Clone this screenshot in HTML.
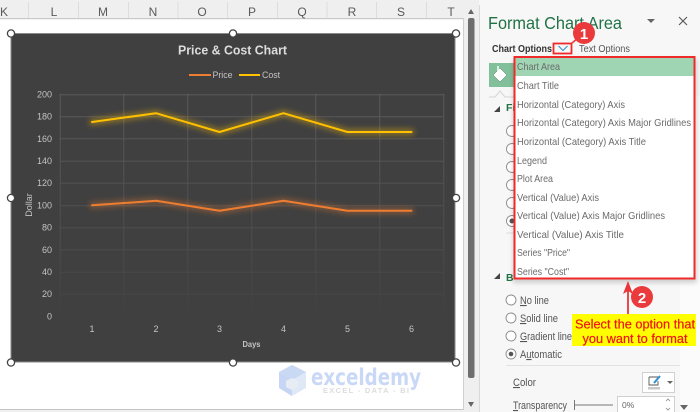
<!DOCTYPE html>
<html><head><meta charset="utf-8">
<style>
html,body{margin:0;padding:0;background:#fff}
svg{display:block}
text{font-family:"Liberation Sans",sans-serif}
.h{font-size:12px;fill:#5a5a5a;text-anchor:middle}
.y{font-size:9px;fill:#c4c4c4;text-anchor:end}
.x{font-size:9px;fill:#c4c4c4;text-anchor:middle}
.m{font-size:10.4px;fill:#6b6b6b}
.l{font-size:11px;fill:#555}
</style></head>
<body>
<svg width="700" height="412" viewBox="0 0 700 412" xmlns="http://www.w3.org/2000/svg">
<defs>
<filter id="g" x="-10%" y="-80%" width="120%" height="260%"><feGaussianBlur stdDeviation="3"/></filter>
<filter id="s" x="-5%" y="-5%" width="110%" height="110%"><feGaussianBlur stdDeviation="2.5"/></filter>
<linearGradient id="gr" gradientUnits="userSpaceOnUse" x1="0" y1="94" x2="0" y2="316"><stop offset="0" stop-color="#5e5e5e"/><stop offset=".65" stop-color="#4f4f4f"/><stop offset="1" stop-color="#424242"/></linearGradient>
</defs>
<rect width="700" height="412" fill="#fff"/>
<!-- column header -->
<rect width="468" height="18" fill="#efefef"/>
<rect y="18" width="464" height="1.2" fill="#c8c8c8"/>
<g stroke="#dcdcdc"><path d="M28.5 2V18M78.5 2V18M128.5 2V18M178 2V18M227.5 2V18M277.5 2V18M327 2V18M376.5 2V18M426.5 2V18"/></g>
<text class="h" x="4" y="16">K</text><text class="h" x="54" y="16">L</text><text class="h" x="103" y="16">M</text><text class="h" x="153" y="16">N</text><text class="h" x="202" y="16">O</text><text class="h" x="252" y="16">P</text><text class="h" x="302" y="16">Q</text><text class="h" x="352" y="16">R</text><text class="h" x="401" y="16">S</text><text class="h" x="451" y="16">T</text>
<!-- sheet edges -->
<rect y="409" width="464" height="3" fill="#f0f0f0"/><rect y="409" width="464" height="1" fill="#c4c4c4"/>
<rect x="463" y="18" width="1" height="392" fill="#d0d0d0"/>
<rect x="464" y="0" width="15" height="412" fill="#efefef"/>
<rect x="468" y="18" width="6.5" height="360" rx="2" fill="#6e6e6e"/>
<path d="M468 14L471 9L474 14Z" fill="#666"/><path d="M468 402H474L471 407Z" fill="#666"/>
<!-- chart -->
<rect x="11" y="33.5" width="444" height="328.5" fill="#404040" stroke="#8a8a8a" stroke-width="1"/>
<text x="232.5" y="54.500" text-anchor="middle" font-size="13" font-weight="bold" fill="#dcdcdc" textLength="109" lengthAdjust="spacingAndGlyphs">Price &amp; Cost Chart</text>
<path d="M189 75H211" stroke="#ed7d31" stroke-width="2"/><text x="212.500" y="78" font-size="8.800" fill="#c4c4c4">Price</text>
<path d="M239 75H260" stroke="#ffc000" stroke-width="2"/><text x="262" y="78" font-size="8.800" fill="#c4c4c4">Cost</text>
<!-- grid -->
<g stroke="url(#gr)" stroke-width="1" fill="none">
<path d="M60 94.5H443V95H60ZM60 116.500H443V117H60ZM60 138.500H443V139H60ZM60 161H443V161.500H60ZM60 183H443V183.500H60ZM60 205.500H443V206H60ZM60 227.500H443V228H60ZM60 249.500H443V250H60ZM60 272H443V272.500H60ZM60 294H443V294.500H60Z" stroke-width=".5"/>
<path d="M60 94V316H60.500V94ZM123.500 94V316H124V94ZM187.500 94V316H188V94ZM251.500 94V316H252V94ZM315.500 94V316H316V94ZM379.500 94V316H380V94ZM443.500 94V316H444V94Z" stroke-width=".5"/>
</g>
<text class="y" x="52" y="97.500">200</text><text class="y" x="52" y="119.500">180</text><text class="y" x="52" y="142">160</text><text class="y" x="52" y="164">140</text><text class="y" x="52" y="186">120</text><text class="y" x="52" y="208.500">100</text><text class="y" x="52" y="230.500">80</text><text class="y" x="52" y="253">60</text><text class="y" x="52" y="275">40</text><text class="y" x="52" y="297">20</text><text class="y" x="52" y="319.500">0</text>
<text class="x" x="92" y="332">1</text><text class="x" x="156" y="332">2</text><text class="x" x="219.500" y="332">3</text><text class="x" x="283.500" y="332">4</text><text class="x" x="347.500" y="332">5</text><text class="x" x="411.500" y="332">6</text>
<text x="251.500" y="347" text-anchor="middle" font-size="8.500" font-weight="bold" fill="#c4c4c4" textLength="18" lengthAdjust="spacingAndGlyphs">Days</text>
<text transform="translate(32,205) rotate(-90)" text-anchor="middle" font-size="9" fill="#c4c4c4">Dollar</text>
<!-- series -->
<g fill="none" stroke-linejoin="round" stroke-linecap="round">
<path d="M92 205.300L156 200.800L219.500 210.800L283.500 200.800L347.500 210.800L411.500 210.800" stroke="#ed7d31" stroke-width="6" opacity=".38" filter="url(#g)"/>
<path d="M92 122L156 113.200L219.500 132L283.500 113.200L347.500 132L411.500 132" stroke="#ffc000" stroke-width="6" opacity=".42" filter="url(#g)"/>
<path d="M92 205.300L156 200.800L219.500 210.800L283.500 200.800L347.500 210.800L411.500 210.800" stroke="#ed7d31" stroke-width="2"/>
<path d="M92 122L156 113.200L219.500 132L283.500 113.200L347.500 132L411.500 132" stroke="#ffc000" stroke-width="2"/>
</g>
<!-- handles -->
<g fill="#fff" stroke="#444" stroke-width="1.300">
<circle cx="11" cy="33.500" r="3.600"/><circle cx="233" cy="33.500" r="3.600"/><circle cx="456" cy="33.500" r="3.600"/>
<circle cx="11" cy="198" r="3.600"/><circle cx="456" cy="198" r="3.600"/>
<circle cx="11" cy="362.500" r="3.600"/><circle cx="233" cy="362.500" r="3.600"/><circle cx="456" cy="362.500" r="3.600"/>
</g>
<!-- watermark -->
<path d="M292 365L306 372V388L292 396L279 388V372Z" fill="#dfe8f6"/>
<path d="M292 365L306 372L292 380L279 372Z" fill="#c9d8f3"/>
<path d="M279 372L292 380V396L279 388Z" fill="#c6d6f4"/>
<path d="M286 381L292 378L298 381V387L292 390L286 387Z" fill="#e8edf4"/>
<text x="311" y="385" font-size="23" font-weight="bold" fill="#c9d8f6" style="font-family:'DejaVu Sans',sans-serif" textLength="110" lengthAdjust="spacingAndGlyphs">exceldemy</text>
<text x="323" y="393" font-size="7.500" font-weight="bold" fill="#dcdcdc" letter-spacing="1.300">EXCEL - DATA - BI</text>
<!-- panel -->
<rect x="479" y="0" width="221" height="412" fill="#f7f7f7"/>
<rect x="479" y="5" width="1" height="407" fill="#d9d9d9"/>
<rect x="680" y="96" width="20" height="316" fill="#fbfbfb"/>
<text x="488" y="29" font-size="17.500" fill="#217346" textLength="134" lengthAdjust="spacingAndGlyphs">Format Chart Area</text>
<path d="M647 19H655L651 23Z" fill="#666"/>
<path d="M679 17L687 25M687 17L679 25" stroke="#555" stroke-width="1.100"/>
<text x="492" y="52" font-size="10.500" font-weight="bold" fill="#333" textLength="60" lengthAdjust="spacingAndGlyphs">Chart Options</text>
<text x="579" y="52" font-size="10.500" fill="#555" textLength="51" lengthAdjust="spacingAndGlyphs">Text Options</text>
<path d="M558.500 46L563 50.500L567.500 46" fill="none" stroke="#2e8fd0" stroke-width="1"/>
<rect x="553.500" y="43.500" width="18" height="10" fill="none" stroke="#f02a2a" stroke-width="1.800"/>
<path d="M572 43L578 38" stroke="#e8363a" stroke-width="1.500"/>
<circle cx="584" cy="33" r="11" fill="#ea3a3c"/>
<text x="584" y="39" text-anchor="middle" font-size="15" font-weight="bold" fill="#fff">1</text>
<!-- fill tile -->
<rect x="489" y="63" width="27" height="24" fill="#82c09b"/>
<path d="M493 75L500 68L507 75L500 82Z" fill="#fff" stroke="#3f7d5a" stroke-width=".5"/>
<path d="M498 66V72" stroke="#fff" stroke-width="1.500"/>
<path d="M489 97H495L500 91L505 97H514" fill="none" stroke="#d4d4d4"/>
<path d="M494 112L500 106V112Z" fill="#444"/>
<text x="506" y="111" font-size="10.500" font-weight="bold" fill="#217346">Fi</text>
<g fill="#fff" stroke="#8a8a8a" stroke-width=".9">
<circle cx="512" cy="131" r="5.500"/><circle cx="512" cy="149" r="5.500"/><circle cx="512" cy="167" r="5.500"/><circle cx="512" cy="185" r="5.500"/><circle cx="512" cy="203" r="5.500"/><circle cx="512" cy="221" r="5.500"/>
<circle cx="511" cy="300" r="5"/><circle cx="511" cy="318" r="5"/><circle cx="511" cy="336" r="5"/><circle cx="511" cy="354" r="5"/>
</g>
<circle cx="512" cy="221" r="2.500" fill="#555"/><circle cx="511" cy="354" r="2.300" fill="#555"/>
<path d="M506 233H514" stroke="#ddd"/>
<path d="M494 279L500 273V279Z" fill="#444"/>
<text x="506" y="281" font-size="10.500" font-weight="bold" fill="#217346">B</text>
<text class="l" x="520" y="304" textLength="29" lengthAdjust="spacingAndGlyphs"><tspan text-decoration="underline">N</tspan>o line</text>
<text class="l" x="520" y="322" textLength="38" lengthAdjust="spacingAndGlyphs"><tspan text-decoration="underline">S</tspan>olid line</text>
<text class="l" x="520" y="340" textLength="52" lengthAdjust="spacingAndGlyphs"><tspan text-decoration="underline">G</tspan>radient line</text>
<text class="l" x="520" y="358" textLength="42" lengthAdjust="spacingAndGlyphs">A<tspan text-decoration="underline">u</tspan>tomatic</text>
<path d="M506 365.500H680" stroke="#e2e2e2"/>
<text class="l" x="513" y="386" textLength="23" lengthAdjust="spacingAndGlyphs"><tspan text-decoration="underline">C</tspan>olor</text>
<rect x="642.500" y="372.500" width="32" height="20" fill="#fff" stroke="#d0d0d0"/>
<path d="M649 377H658M649 377V385H658V381" fill="none" stroke="#555" stroke-width=".9"/>
<path d="M654 383L660 376" stroke="#2e8fd0" stroke-width="2"/>
<rect x="648" y="387" width="12" height="2.500" fill="#c8c8c8"/>
<path d="M667 381H673L670 384Z" fill="#666"/>
<text class="l" x="513" y="409" textLength="54" lengthAdjust="spacingAndGlyphs"><tspan text-decoration="underline">T</tspan>ransparency</text>
<path d="M574.500 400V410M575 405H613" stroke="#777" stroke-width="1"/>
<rect x="617.500" y="396.500" width="57" height="20" fill="#fff" stroke="#d0d0d0"/>
<text x="622" y="408" font-size="8.500" fill="#666">0%</text>
<path d="M666 401L668 399L670 401M666 408L668 410L670 408" fill="none" stroke="#888" stroke-width=".8"/>
<path d="M680 405H688L684 410Z" fill="#666"/>
<!-- dropdown -->
<rect x="513" y="59" width="184" height="224" fill="#000" opacity=".16" filter="url(#s)"/>
<rect x="515" y="57" width="179" height="221.500" fill="#fff"/>
<rect x="515" y="58" width="179" height="18" fill="#9fd5b3"/>
<text class="m" x="517" y="70" textLength="43" lengthAdjust="spacingAndGlyphs">Chart Area</text>
<text class="m" x="517" y="89" textLength="42" lengthAdjust="spacingAndGlyphs">Chart Title</text>
<text class="m" x="517" y="108" textLength="108" lengthAdjust="spacingAndGlyphs">Horizontal (Category) Axis</text>
<text class="m" x="517" y="126" textLength="174" lengthAdjust="spacingAndGlyphs">Horizontal (Category) Axis Major Gridlines</text>
<text class="m" x="517" y="145" textLength="129" lengthAdjust="spacingAndGlyphs">Horizontal (Category) Axis Title</text>
<text class="m" x="517" y="164" textLength="30" lengthAdjust="spacingAndGlyphs">Legend</text>
<text class="m" x="517" y="182" textLength="36" lengthAdjust="spacingAndGlyphs">Plot Area</text>
<text class="m" x="517" y="201" textLength="82" lengthAdjust="spacingAndGlyphs">Vertical (Value) Axis</text>
<text class="m" x="517" y="219" textLength="148" lengthAdjust="spacingAndGlyphs">Vertical (Value) Axis Major Gridlines</text>
<text class="m" x="517" y="238" textLength="107" lengthAdjust="spacingAndGlyphs">Vertical (Value) Axis Title</text>
<text class="m" x="517" y="256" textLength="53" lengthAdjust="spacingAndGlyphs">Series "Price"</text>
<text class="m" x="517" y="275" textLength="52" lengthAdjust="spacingAndGlyphs">Series "Cost"</text>
<rect x="514.500" y="57" width="180" height="221.500" fill="none" stroke="#f02a2a" stroke-width="2"/>
<!-- callout 2 -->
<path d="M628 314V287" stroke="#e8363a" stroke-width="1.800"/>
<path d="M623 294L628 281L633 294L628 291Z" fill="#e8363a"/>
<circle cx="642" cy="297" r="11" fill="#ea3a3c"/>
<text x="642" y="303" text-anchor="middle" font-size="15" font-weight="bold" fill="#fff">2</text>
<rect x="572" y="314" width="124" height="32" fill="#ffff00"/>
<text x="635" y="328.500" text-anchor="middle" font-size="12.500" fill="#f01414" stroke="#f01414" stroke-width=".2" textLength="120" lengthAdjust="spacingAndGlyphs">Select the option that</text>
<text x="635" y="343" text-anchor="middle" font-size="12.500" fill="#f01414" stroke="#f01414" stroke-width=".2" textLength="105" lengthAdjust="spacingAndGlyphs">you want to format</text>
</svg>
</body></html>
